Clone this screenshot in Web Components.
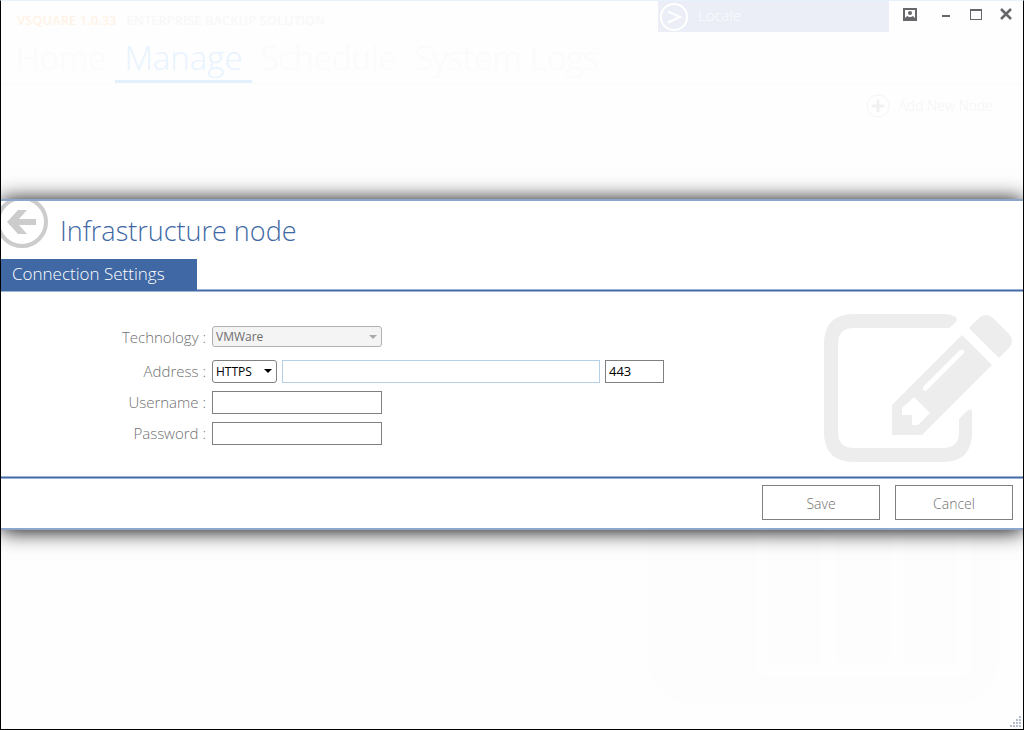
<!DOCTYPE html>
<html lang="en">
<head>
<meta charset="utf-8">
<meta name="viewport" content="width=device-width, initial-scale=1">
<title>VSquare</title>
<style>
    body {
        margin: 0;
        font-family: "Open Sans", "Noto Sans", sans-serif;
        font-weight: 300;
        color: #707070;
    }
</style>
</head>
<body>
<app-window>
    <title-bar slot="header" product="VSQUARE 1.0.33" tagline="ENTERPRISE BACKUP SOLUTION" locale="Locale"></title-bar>
    <main-nav slot="header" active="Manage" items="Home,Manage,Schedule,System Logs"></main-nav>
    <tool-bar slot="header">Add New Node</tool-bar>
    <node-dialog slot="dialog" heading="Infrastructure node" tab="Connection Settings">
        <connection-form></connection-form>
    </node-dialog>
</app-window>

<script>
class AppWindow extends HTMLElement {
    constructor() {
        super();
        this.attachShadow({ mode: 'open' });

        this.shadowRoot.innerHTML = `
            <style>
                :host {
                    display: flex;
                    flex-direction: column;
                    box-sizing: border-box;
                    position: relative;
                    min-height: 100vh;
                    overflow: hidden;
                    background: #fefefe;
                    border: 1px solid #000;
                    border-top-color: #e6f3ff;
                }

                .overlay {
                    position: absolute;
                    inset: 0;
                    display: flex;
                    align-items: center;
                    padding-bottom: 1px;
                    pointer-events: none;
                }

                ::slotted([slot="dialog"]) {
                    flex: 1;
                    pointer-events: auto;
                }

                .backdrop {
                    align-self: flex-end;
                    margin: auto 24px 24px 0;
                }

                .grip {
                    position: absolute;
                    right: 1px;
                    bottom: 1px;
                }
            </style>

            <slot name="header"></slot>
            <svg class="backdrop" width="352" height="352" aria-hidden="true">
                <rect width="352" height="352" rx="48" fill="#fdfdfd"/>
                <path d="M109 0h215v312a12 12 0 0 1-12 12h-191a12 12 0 0 1-12-12z" fill="#fefefe"/>
                <g fill="#fdfdfd">
                    <rect x="122" y="40" width="53" height="271" rx="8"/>
                    <rect x="189" y="40" width="54" height="271" rx="8"/>
                    <rect x="257" y="40" width="53" height="271" rx="8"/>
                </g>
            </svg>
            <div class="overlay"><slot name="dialog"></slot></div>
            <svg class="grip" width="12" height="12" fill="#b4bccd" aria-hidden="true">
                <path d="M9 0h2v2h-2zM6 3h2v2h-2zM9 3h2v2h-2zM3 6h2v2h-2zM6 6h2v2h-2zM9 6h2v2h-2zM0 9h2v2h-2zM3 9h2v2h-2zM6 9h2v2h-2zM9 9h2v2h-2z"/>
            </svg>
        `;
    }
}

class TitleBar extends HTMLElement {
    constructor() {
        super();
        this.attachShadow({ mode: 'open' });

        this.shadowRoot.innerHTML = `
            <style>
                :host {
                    display: flex;
                    height: 31px;
                    padding-left: 16px;
                }

                .brand {
                    flex: 1;
                    display: flex;
                    gap: 10px;
                    padding-top: 10px;
                    font-size: 13px;
                    line-height: 18px;
                    font-weight: 600;
                    color: #f8f8f8;
                    white-space: nowrap;
                }

                .product {
                    color: #fff3e6;
                }

                button {
                    border: 0;
                    padding: 0;
                    background: none;
                    font: inherit;
                    color: inherit;
                }

                .locale {
                    display: flex;
                    align-items: center;
                    gap: 10px;
                    width: 231px;
                    padding-left: 2px;
                    background: #ebeef6;
                    color: #fbfcfe;
                    font-size: 15px;
                    line-height: 20px;
                }

                .locale svg {
                    flex: none;
                }

                .locale span {
                    padding-bottom: 4px;
                }

                .controls {
                    display: flex;
                    width: 134px;
                    height: 26px;
                }

                .controls button {
                    display: flex;
                    align-items: center;
                    justify-content: center;
                    width: 30px;
                }

                .controls .user {
                    width: 42px;
                }
            </style>

            <div class="brand"><span class="product"></span><span class="tagline"></span></div>
            <button class="locale" type="button">
                <svg width="28" height="28" fill="none" stroke="#fff" stroke-width="2" aria-hidden="true">
                    <circle cx="14" cy="14" r="13"/>
                    <path d="M8 8.500l12 5.500-12 5.500"/>
                </svg>
                <span></span>
            </button>
            <div class="controls">
                <button class="user" type="button" aria-label="Account">
                    <svg width="14" height="14">
                        <path d="M1 2h12v11h-12z" fill="none" stroke="#67676b" stroke-width="2"/>
                        <circle cx="7" cy="6" r="2" fill="#67676b"/>
                        <path d="M2 13v-2l2-2 2 1h2l2-1 2 2v2z" fill="#67676b"/>
                    </svg>
                </button>
                <button type="button" aria-label="Minimize">
                    <svg width="12" height="12"><path d="M2 7h8v2h-8z" fill="#67676b"/></svg>
                </button>
                <button type="button" aria-label="Maximize">
                    <svg width="12" height="12" fill="#67676b">
                        <path fill-rule="evenodd" d="M0 1h12v11h-12zM1 3v8h10v-8z"/>
                    </svg>
                </button>
                <button type="button" aria-label="Close">
                    <svg width="12" height="12" stroke="#67676b" stroke-width="2.500">
                        <path d="M1 1l10 10M11 1l-10 10"/>
                    </svg>
                </button>
            </div>
        `;
    }

    connectedCallback() {
        this.shadowRoot.querySelector('.product').textContent = this.getAttribute('product');
        this.shadowRoot.querySelector('.tagline').textContent = this.getAttribute('tagline');
        this.shadowRoot.querySelector('.locale span').textContent = this.getAttribute('locale');
    }
}

class MainNav extends HTMLElement {
    constructor() {
        super();
        this.attachShadow({ mode: 'open' });

        this.shadowRoot.innerHTML = `
            <style>
                :host {
                    display: block;
                    padding-left: 6px;
                    border-bottom: 1px solid #fbfbfb;
                }

                nav {
                    display: flex;
                }

                a {
                    padding: 4px 9px 0;
                    border-bottom: 3px solid transparent;
                    font-size: 33px;
                    line-height: 44px;
                    color: #fbfbfb;
                    text-decoration: none;
                    white-space: nowrap;
                }

                a[aria-current] {
                    color: #e9f3ff;
                    border-color: #e3f1ff;
                }
            </style>

            <nav></nav>
        `;
    }

    connectedCallback() {
        const nav = this.shadowRoot.querySelector('nav');
        for (let name of this.getAttribute('items').split(',')) {
            const link = document.createElement('a');
            link.href = '#';
            link.textContent = name;
            if (name === this.getAttribute('active')) {
                link.setAttribute('aria-current', 'page');
            }
            nav.append(link);
        }
    }
}

class ToolBar extends HTMLElement {
    constructor() {
        super();
        this.attachShadow({ mode: 'open' });

        this.shadowRoot.innerHTML = `
            <style>
                :host {
                    display: flex;
                    justify-content: flex-end;
                    padding: 10px 30px 0 0;
                }

                button {
                    display: flex;
                    align-items: center;
                    gap: 8px;
                    border: 0;
                    padding: 0;
                    background: none;
                    font: inherit;
                    font-size: 14px;
                    line-height: 24px;
                    color: #f5f5f5;
                }
            </style>

            <button type="button">
                <svg width="24" height="24" aria-hidden="true">
                    <circle cx="12" cy="12" r="11" fill="none" stroke="#f5f5f5"/>
                    <path d="M12 6v12M6 12h12" stroke="#f1f1f1" stroke-width="3"/>
                </svg>
                <slot></slot>
            </button>
        `;
    }
}

class NodeDialog extends HTMLElement {
    constructor() {
        super();
        this.attachShadow({ mode: 'open' });

        this.shadowRoot.innerHTML = `
            <style>
                :host {
                    --blue: #4068a4;
                    --edge: #9fb4d5;
                    display: block;
                    background: #fff;
                    border: solid #8fa6cc;
                    border-width: 2px 0;
                    box-shadow: 0 1px 20px #000;
                }

                header {
                    display: flex;
                    height: 58px;
                    overflow: hidden;
                }

                .back {
                    flex: none;
                    width: 52px;
                    height: 52px;
                    margin: -5px 0 0 -5px;
                    padding: 0;
                    border: 0;
                    background: none;
                }

                h1 {
                    margin: 0 0 0 12px;
                    font-size: 27px;
                    line-height: 60px;
                    font-weight: 300;
                    color: var(--blue);
                    white-space: nowrap;
                }

                .tabs {
                    display: flex;
                    border-bottom: 1px solid var(--edge);
                    box-shadow: inset 0 -1px var(--blue), inset 0 -2px var(--edge);
                }

                .tabs button {
                    width: 196px;
                    height: 32px;
                    padding: 0 0 2px 11px;
                    border: 0;
                    background: var(--blue);
                    font: inherit;
                    font-size: 17px;
                    line-height: 30px;
                    color: #fff;
                    text-align: left;
                    white-space: nowrap;
                }

                .content {
                    display: flex;
                    justify-content: space-between;
                    padding: 22px 10px 13px 0;
                }

                ::slotted(*) {
                    flex: 1;
                }

                .picture {
                    flex: none;
                }

                footer {
                    display: flex;
                    justify-content: flex-end;
                    gap: 15px;
                    padding: 8px 10px;
                    border-top: 1px solid var(--edge);
                    box-shadow: inset 0 1px var(--blue), inset 0 2px var(--edge);
                }

                footer button {
                    width: 118px;
                    height: 35px;
                    border: 1px solid #808080;
                    padding: 1px 0 0;
                    background: #fff;
                    font: inherit;
                    font-size: 14px;
                    color: inherit;
                }
            </style>

            <header>
                <button class="back" type="button" aria-label="Back">
                    <svg width="52" height="52" aria-hidden="true">
                        <circle cx="26" cy="26" r="24" fill="none" stroke="#ccc" stroke-width="4"/>
                        <path d="M11 26l11-12h9l-8 9h17v6h-17l8 9h-9z" fill="#ccc"/>
                    </svg>
                </button>
                <h1></h1>
            </header>
            <div class="tabs" role="tablist"><button type="button" role="tab" aria-selected="true"></button></div>
            <div class="content">
                <slot></slot>
                <svg class="picture" width="189" height="149" fill="#ededed" aria-hidden="true">
                    <path d="M30 0h88q9 0 14 3 2 3-1 6l-6 5h-95q-16 0-16 16v88q0 16 16 16h89q16 0 16-16v-13l8-8q5-4 5 2v19q0 30-29 30h-89q-30 0-30-30v-88q0-30 30-30z"/>
                    <path d="M155 4q7-6 14 0l16 16q6 7 0 14l-10 10-30-30z"/>
                    <path fill-rule="evenodd" d="M138 21l30 30-70 70h-30v-30zM136 36l-37 37q-1 4 3 4l38-38q2-4-4-3zM90 83l-12 11v7h10v10h6l12-12z"/>
                </svg>
            </div>
            <footer>
                <button type="button">Save</button>
                <button type="button">Cancel</button>
            </footer>
        `;
    }

    connectedCallback() {
        this.shadowRoot.querySelector('h1').textContent = this.getAttribute('heading');
        this.shadowRoot.querySelector('[role="tab"]').textContent = this.getAttribute('tab');
    }
}

class ConnectionForm extends HTMLElement {
    constructor() {
        super();
        this.attachShadow({ mode: 'open' });

        this.shadowRoot.innerHTML = `
            <style>
                * {
                    box-sizing: border-box;
                }

                :host {
                    display: block;
                    padding-top: 12px;
                }

                form {
                    display: grid;
                    grid-template-columns: 205px auto;
                    justify-content: start;
                    gap: 8px 6px;
                }

                label {
                    font-size: 15px;
                    line-height: 22px;
                    text-align: right;
                }

                .row {
                    display: flex;
                    gap: 5px;
                }

                .technology {
                    margin-bottom: 5px;
                }

                .picker {
                    position: relative;
                    display: flex;
                }

                .picker svg {
                    position: absolute;
                    right: 5px;
                    top: 9px;
                    pointer-events: none;
                }

                input, select {
                    margin: 0;
                    border: 1px solid #808080;
                    border-radius: 0;
                    background: #fff;
                    font-family: inherit;
                    color: #000;
                }

                input {
                    width: 170px;
                    height: 23px;
                    padding: 0 3px 2px;
                    font-size: 13px;
                    font-weight: 400;
                }

                select {
                    appearance: none;
                    width: 65px;
                    height: 23px;
                    padding: 0 3px;
                    border-radius: 3px;
                    font-size: 12px;
                    font-weight: 400;
                }

                select:disabled {
                    width: 170px;
                    height: 21px;
                    border-color: #adb2b5;
                    background: #f4f4f4;
                    color: #6d6d6d;
                    opacity: 1;
                }

                .host {
                    width: 318px;
                    border-color: #b5cfe7;
                }

                .port {
                    width: 59px;
                }
            </style>

            <form>
                <label for="technology">Technology :</label>
                <div class="row technology">
                    <div class="picker">
                        <select id="technology" disabled><option>VMWare</option></select>
                        <svg width="8" height="5" fill="#a9a9a9" aria-hidden="true"><path d="M0 0h8l-4 4z"/></svg>
                    </div>
                </div>
                <label for="host">Address :</label>
                <div class="row">
                    <div class="picker">
                        <select aria-label="Protocol"><option>HTTPS</option><option>HTTP</option></select>
                        <svg width="8" height="5" aria-hidden="true"><path d="M0 0h8l-4 4z"/></svg>
                    </div>
                    <input id="host" class="host" type="text">
                    <input class="port" type="text" value="443" aria-label="Port">
                </div>
                <label for="username">Username :</label>
                <div class="row"><input id="username" type="text"></div>
                <label for="password">Password :</label>
                <div class="row"><input id="password" type="password"></div>
            </form>
        `;
    }
}

customElements.define('app-window', AppWindow);
customElements.define('title-bar', TitleBar);
customElements.define('main-nav', MainNav);
customElements.define('tool-bar', ToolBar);
customElements.define('node-dialog', NodeDialog);
customElements.define('connection-form', ConnectionForm);
</script>
</body>
</html>
